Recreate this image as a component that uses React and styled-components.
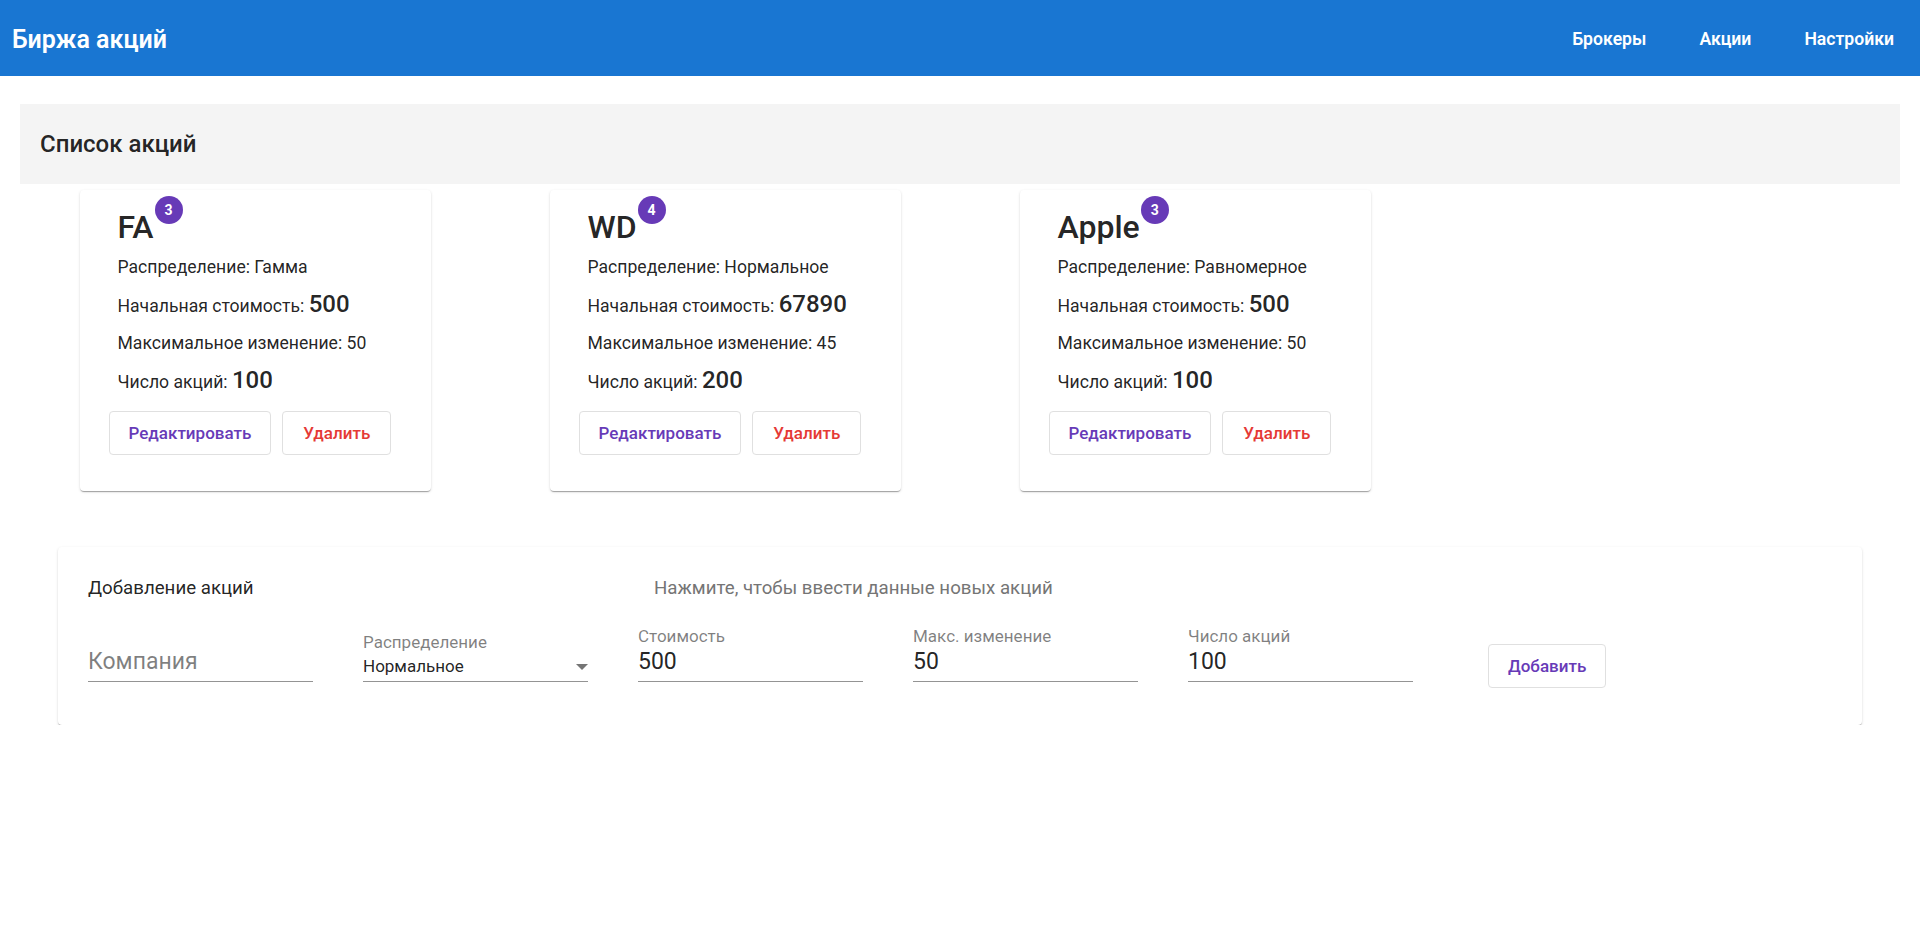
import React from 'react';
import styled, { createGlobalStyle } from 'styled-components';

const GlobalStyle = createGlobalStyle`
  body {
    margin: 0;
    background: #fff;
    color: rgba(0, 0, 0, 0.87);
    font-family: Roboto, "Noto Sans", sans-serif;
  }
`;

const shadow = `0px 2px 1px -1px rgba(0,0,0,0.2), 0px 1px 1px 0px rgba(0,0,0,0.14), 0px 1px 3px 0px rgba(0,0,0,0.12)`;

const AppBar = styled.header`
  height: 76px;
  box-sizing: border-box;
  padding: 2px 26px 0 12px;
  background: #1976d2;
  color: #fff;
  display: flex;
  align-items: center;
  justify-content: space-between;
`;

const Brand = styled.div`
  font-size: 25px;
  font-weight: 600;
`;

const Nav = styled.nav`
  display: flex;
  gap: 53px;
`;

const NavLink = styled.a`
  font-size: 17.6px;
  font-weight: 600;
  cursor: pointer;
`;

const Main = styled.main`
  padding: 28px 20px 0;
`;

const ListTitle = styled.h2`
  margin: 0;
  height: 80px;
  padding: 0 20px;
  display: flex;
  align-items: center;
  background: #f4f4f4;
  font-size: 24px;
  font-weight: 500;
`;

const CardGrid = styled.div`
  margin-top: 6px;
  display: grid;
  grid-template-columns: repeat(4, 1fr);
  justify-items: center;
`;

const Card = styled.div`
  width: 351px;
  box-sizing: border-box;
  padding: 17px 29px 36px;
  background: #fff;
  border-radius: 4px;
  box-shadow: ${shadow};
`;

const Info = styled.div`
  padding-left: 9px;
`;

const TitleWrap = styled.div`
  position: relative;
  display: inline-block;
  font-size: 32px;
  font-weight: 500;
  line-height: 40px;
`;

const Badge = styled.span`
  position: absolute;
  left: calc(100% + 1px);
  top: -11px;
  width: 28px;
  height: 28px;
  border-radius: 50%;
  background: #673ab7;
  color: #fff;
  font-size: 14px;
  font-weight: 700;
  display: flex;
  align-items: center;
  justify-content: center;
`;

const Rows = styled.div`
  margin-top: 7px;
  display: flex;
  flex-direction: column;
  gap: 10px;
`;

const Row = styled.p`
  margin: 0;
  font-size: 17.6px;
  line-height: 27px;
`;

const Big = styled.span`
  font-size: 24px;
  font-weight: 500;
  line-height: 27px;
`;

const Actions = styled.div`
  margin-top: 15px;
  display: flex;
  gap: 11px;
`;

const OutlineButton = styled.button`
  height: 44px;
  padding: 0 ${(p) => p.$px || 19}px;
  background: #fff;
  border: 1px solid #e0e0e0;
  border-radius: 4px;
  color: ${(p) => p.$color || '#673ab7'};
  font-family: Roboto, "Noto Sans", sans-serif;
  font-size: 17px;
  font-weight: 500;
  cursor: pointer;
`;

const Panel = styled.section`
  margin: 56px 38px 0;
  padding: 29px 30px 37px;
  background: #fff;
  border-radius: 4px;
  box-shadow: ${shadow};
`;

const PanelHead = styled.div`
  display: flex;
  font-size: 18.7px;
  line-height: 24px;
`;

const Heading = styled.div`
  width: 566px;
`;

const Secondary = styled.div`
  color: #757575;
`;

const FieldsRow = styled.div`
  margin-top: 26px;
  display: flex;
  align-items: flex-end;
  gap: 50px;
`;

const Field = styled.div`
  width: 225px;
  margin-bottom: 6px;
  display: flex;
  flex-direction: column;
`;

const Label = styled.label`
  font-size: 17px;
  line-height: 20px;
  color: rgba(0, 0, 0, 0.5);
`;

const Value = styled.div`
  font-size: 23px;
  line-height: 28px;
  padding: 2px 0 5px;
  border-bottom: 1px solid rgba(0, 0, 0, 0.42);
  color: ${(p) => (p.$placeholder ? 'rgba(0,0,0,0.5)' : 'rgba(0,0,0,0.87)')};
`;

const SelectValue = styled.div`
  font-size: 17px;
  line-height: 24px;
  padding: 2px 0 3px;
  border-bottom: 1px solid rgba(0, 0, 0, 0.42);
  display: flex;
  align-items: center;
  justify-content: space-between;
`;

const Arrow = styled.span`
  width: 0;
  height: 0;
  margin-top: 2px;
  border-left: 6px solid transparent;
  border-right: 6px solid transparent;
  border-top: 6px solid #757575;
`;

const AddButton = styled(OutlineButton)`
  margin-left: 25px;
`;

const stocks = [
  { name: 'FA', count: 3, dist: 'Гамма', price: 500, change: 50, amount: 100 },
  { name: 'WD', count: 4, dist: 'Нормальное', price: 67890, change: 45, amount: 200 },
  { name: 'Apple', count: 3, dist: 'Равномерное', price: 500, change: 50, amount: 100 },
];

const StockCard = ({ stock }) => (
  <Card>
    <Info>
      <TitleWrap>
        {stock.name}
        <Badge>{stock.count}</Badge>
      </TitleWrap>
      <Rows>
        <Row>Распределение: {stock.dist}</Row>
        <Row>
          Начальная стоимость: <Big>{stock.price}</Big>
        </Row>
        <Row>Максимальное изменение: {stock.change}</Row>
        <Row>
          Число акций: <Big>{stock.amount}</Big>
        </Row>
      </Rows>
    </Info>
    <Actions>
      <OutlineButton>Редактировать</OutlineButton>
      <OutlineButton $color="#e53935" $px={20}>
        Удалить
      </OutlineButton>
    </Actions>
  </Card>
);

const App = () => {
  return (
    <>
      <GlobalStyle />
      <AppBar>
        <Brand>Биржа акций</Brand>
        <Nav>
          <NavLink>Брокеры</NavLink>
          <NavLink>Акции</NavLink>
          <NavLink>Настройки</NavLink>
        </Nav>
      </AppBar>
      <Main>
        <ListTitle>Список акций</ListTitle>
        <CardGrid>
          {stocks.map((s) => (
            <StockCard key={s.name} stock={s} />
          ))}
        </CardGrid>
        <Panel>
          <PanelHead>
            <Heading>Добавление акций</Heading>
            <Secondary>Нажмите, чтобы ввести данные новых акций</Secondary>
          </PanelHead>
          <FieldsRow>
            <Field>
              <Value $placeholder>Компания</Value>
            </Field>
            <Field>
              <Label>Распределение</Label>
              <SelectValue>
                Нормальное
                <Arrow />
              </SelectValue>
            </Field>
            <Field>
              <Label>Стоимость</Label>
              <Value>500</Value>
            </Field>
            <Field>
              <Label>Макс. изменение</Label>
              <Value>50</Value>
            </Field>
            <Field>
              <Label>Число акций</Label>
              <Value>100</Value>
            </Field>
            <AddButton>Добавить</AddButton>
          </FieldsRow>
        </Panel>
      </Main>
    </>
  );
};

export default App;
